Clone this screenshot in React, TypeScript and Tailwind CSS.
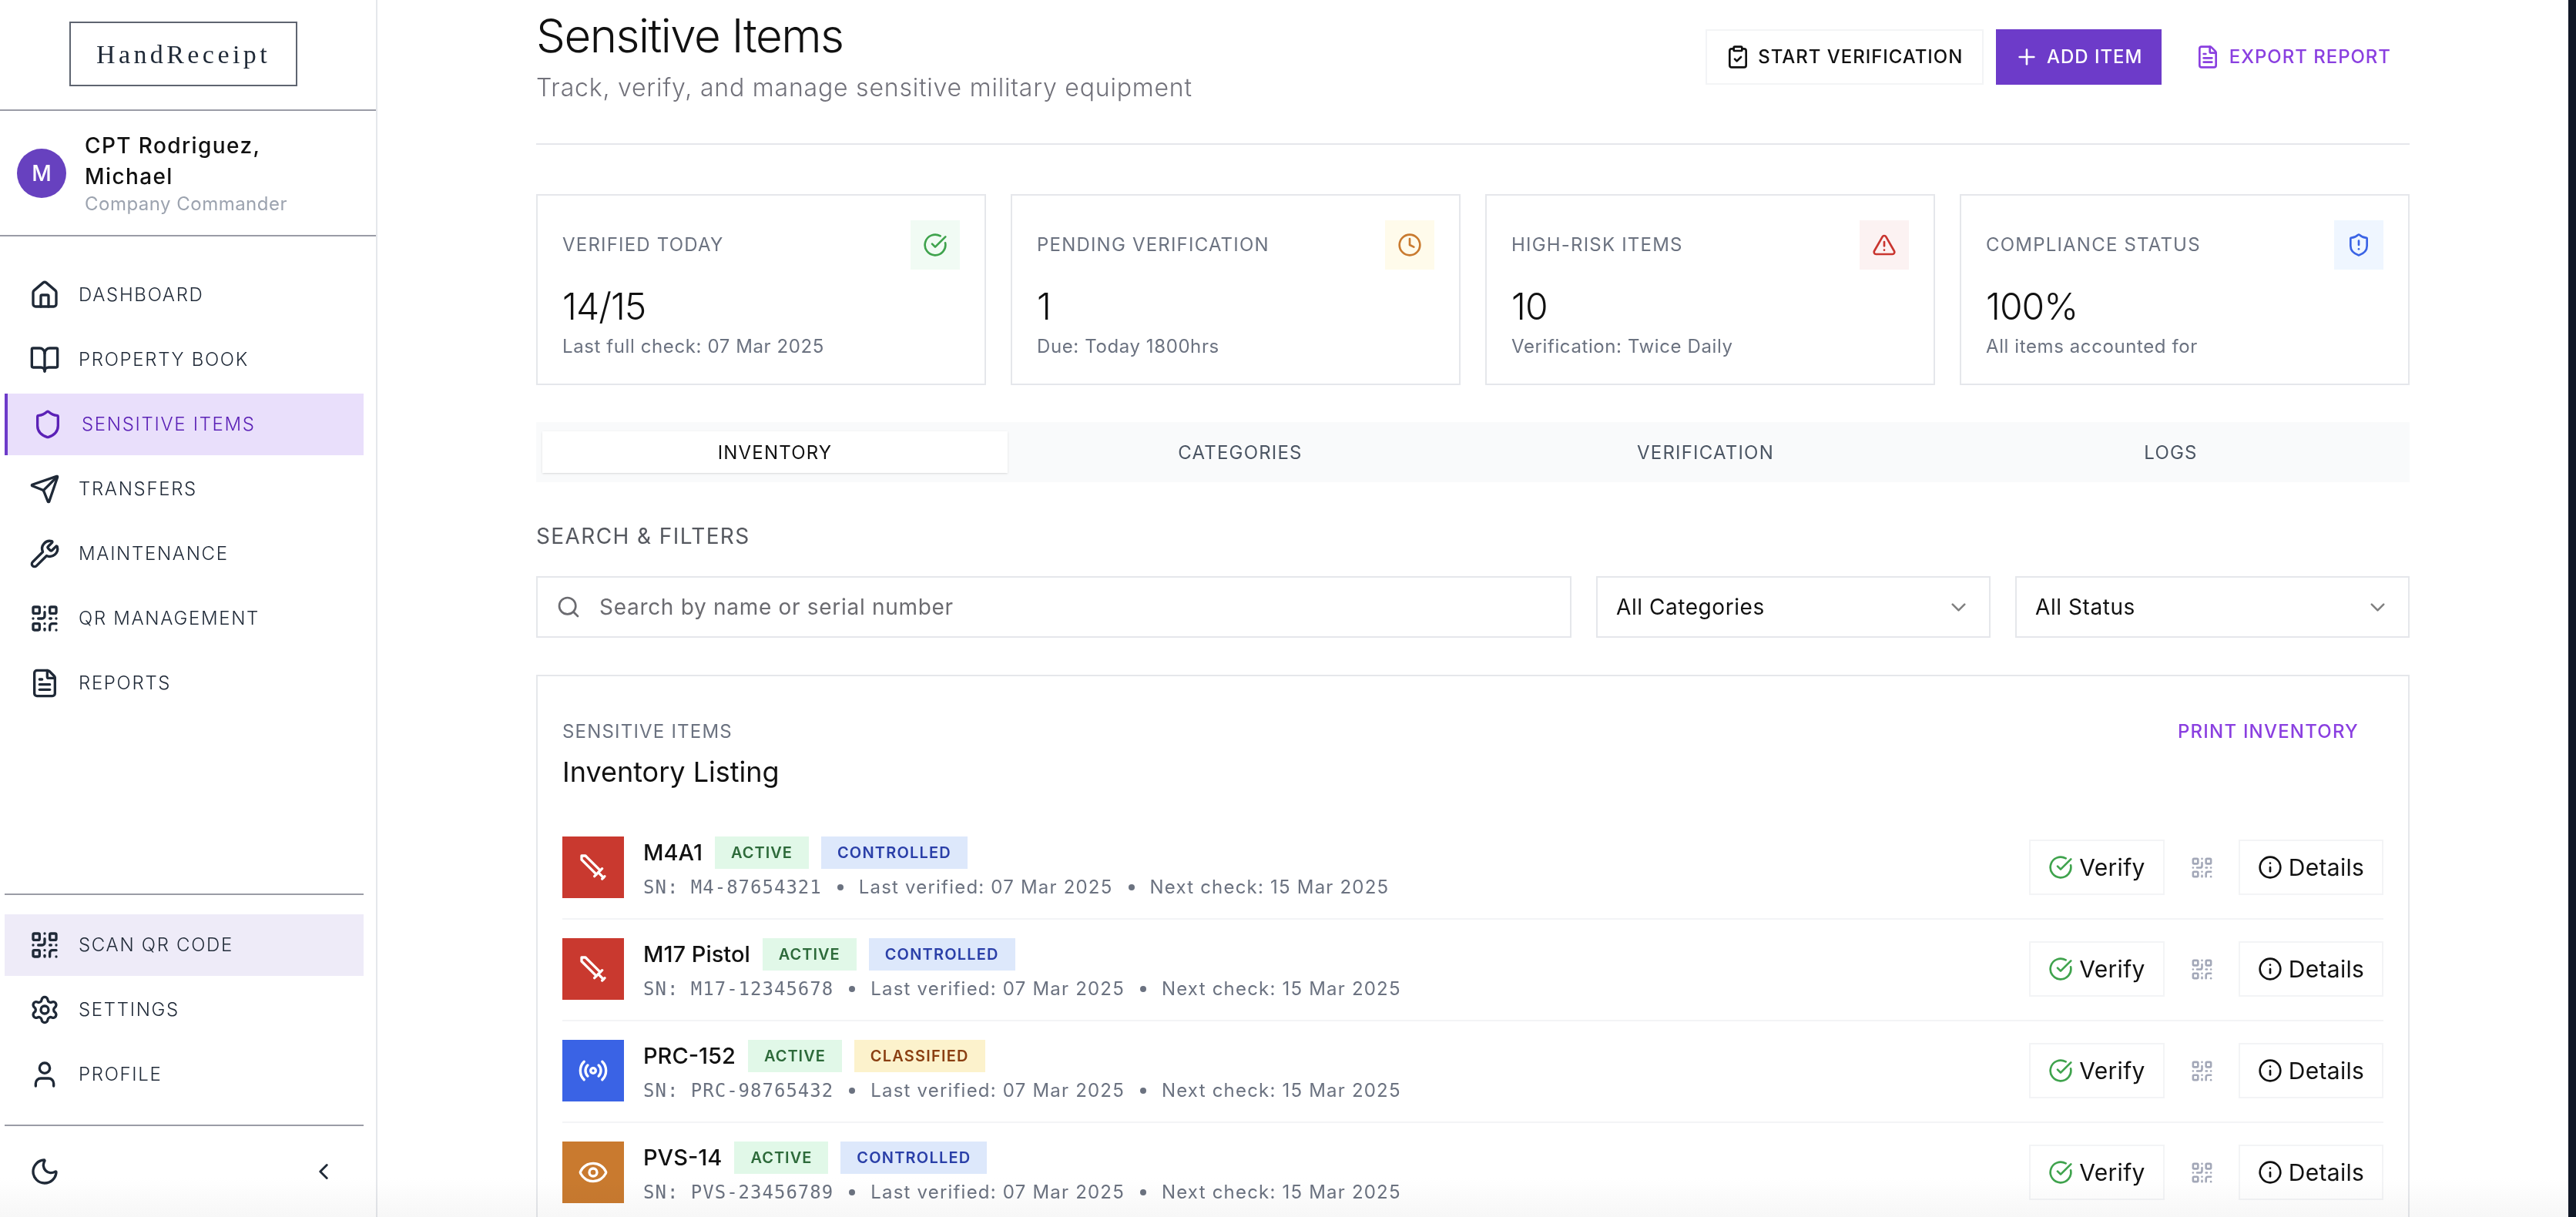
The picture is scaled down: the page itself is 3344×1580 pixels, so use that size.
import {
  BookOpen,
  ChevronDown,
  ChevronLeft,
  CircleCheckBig,
  ClipboardCheck,
  Clock,
  Eye,
  FileText,
  Home,
  Info,
  Moon,
  Plus,
  QrCode,
  Radio,
  Search,
  Send,
  Settings,
  Shield,
  ShieldAlert,
  Sword,
  TriangleAlert,
  User,
  Wrench,
} from 'lucide-react';

const mainNav = [
  { label: 'DASHBOARD', icon: Home },
  { label: 'PROPERTY BOOK', icon: BookOpen },
  { label: 'SENSITIVE ITEMS', icon: Shield, active: true },
  { label: 'TRANSFERS', icon: Send },
  { label: 'MAINTENANCE', icon: Wrench },
  { label: 'QR MANAGEMENT', icon: QrCode },
  { label: 'REPORTS', icon: FileText },
];

const stats = [
  { label: 'VERIFIED TODAY', value: '14/15', sub: 'Last full check: 07 Mar 2025', icon: CircleCheckBig, box: 'bg-[#f1fbf4] text-[#3fa34d]' },
  { label: 'PENDING VERIFICATION', value: '1', sub: 'Due: Today 1800hrs', icon: Clock, box: 'bg-[#fffbeb] text-[#c97a2f]' },
  { label: 'HIGH-RISK ITEMS', value: '10', sub: 'Verification: Twice Daily', icon: TriangleAlert, box: 'bg-[#fcf2f2] text-[#c9352f]' },
  { label: 'COMPLIANCE STATUS', value: '100%', sub: 'All items accounted for', icon: ShieldAlert, box: 'bg-[#eff6ff] text-[#3a63e5]' },
];

const items = [
  { name: 'M4A1', sn: 'M4-87654321', tag: 'CONTROLLED', icon: Sword, color: 'bg-[#c9392f]', flip: true },
  { name: 'M17 Pistol', sn: 'M17-12345678', tag: 'CONTROLLED', icon: Sword, color: 'bg-[#c9392f]', flip: true },
  { name: 'PRC-152', sn: 'PRC-98765432', tag: 'CLASSIFIED', icon: Radio, color: 'bg-[#3a63e5]' },
  { name: 'PVS-14', sn: 'PVS-23456789', tag: 'CONTROLLED', icon: Eye, color: 'bg-[#c97a2f]' },
];

function NavItem({ label, icon: Icon, active, tint }: { label: string; icon: typeof Home; active?: boolean; tint?: boolean }) {
  return (
    <div
      className={
        active
          ? 'flex h-[80px] items-center gap-[24px] border-l-4 border-[#6d3bc9] bg-[#e9dffb] pl-[32px] text-[#5b21b6]'
          : tint
            ? 'flex h-[80px] items-center gap-[24px] bg-[#eeebf8] pl-[32px] text-[#1f2937]'
            : 'flex h-[80px] items-center gap-[24px] pl-[32px] text-[#1f2937]'
      }
    >
      <Icon className="size-[40px] shrink-0" strokeWidth={2} />
      <span className="text-[24px] font-light tracking-[0.07em]">{label}</span>
    </div>
  );
}

function Sidebar() {
  return (
    <aside className="flex h-full w-[490px] shrink-0 flex-col border-r-2 border-[#e5e7eb] bg-white">
      <div className="flex h-[144px] items-center justify-center border-b-2 border-[#9a9ca6] pr-[12px] pb-[2px]">
        <div className="flex h-[84px] w-[296px] items-center justify-center border-2 border-[#5e6470] font-['Liberation_Serif',serif] text-[34px] tracking-[0.13em] text-[#1f2937]">
          HandReceipt
        </div>
      </div>
      <div className="flex h-[163px] items-center gap-[24px] border-b-2 border-[#9a9ca6] pl-[22px]">
        <div className="flex size-[64px] shrink-0 items-center justify-center rounded-full bg-[#6741bf] text-[28px] font-medium text-white">
          M
        </div>
        <div>
          <div className="w-[320px] text-[28px] leading-[40px] font-medium tracking-[0.05em] text-[#111111]">
            CPT Rodriguez, Michael
          </div>
          <div className="text-[24px] leading-[32px] tracking-[0.02em] text-[#9ca3af]">Company Commander</div>
        </div>
      </div>
      <nav className="flex flex-col gap-[4px] pt-[36px] pr-[16px] pl-[6px]">
        {mainNav.map((item) => (
          <NavItem key={item.label} {...item} />
        ))}
      </nav>
      <div className="mt-auto mr-[16px] ml-[6px] flex flex-col gap-[4px] border-t-2 border-[#9a9ca6] pt-[25px] pb-[25px]">
        <NavItem label="SCAN QR CODE" icon={QrCode} tint />
        <NavItem label="SETTINGS" icon={Settings} />
        <NavItem label="PROFILE" icon={User} />
      </div>
      <div className="mr-[16px] ml-[6px] flex h-[120px] items-center justify-between border-t-2 border-[#9a9ca6] pr-[35px] pl-[32px] text-[#1f2937]">
        <Moon className="size-[40px]" strokeWidth={2} />
        <ChevronLeft className="size-[34px]" strokeWidth={2} />
      </div>
    </aside>
  );
}

function StatCard({ label, value, sub, icon: Icon, box }: (typeof stats)[number]) {
  return (
    <div className="h-[248px] border-2 border-[#e5e7eb] px-[32px] pt-[32px]">
      <div className="flex h-[64px] items-center justify-between">
        <span className="text-[24px] tracking-[0.05em] text-[#6b7280]">{label}</span>
        <div className={`flex size-[64px] items-center justify-center ${box}`}>
          <Icon className="size-[32px]" strokeWidth={2} />
        </div>
      </div>
      <div className="mt-[18px] text-[48px] leading-[60px] font-light tracking-[-0.02em] text-[#111111]">{value}</div>
      <div className="mt-[6px] text-[24px] leading-[32px] tracking-[0.025em] text-[#6b7280]">{sub}</div>
    </div>
  );
}

function Row({ item, last }: { item: (typeof items)[number]; last: boolean }) {
  const Icon = item.icon;
  return (
    <div className={last ? 'flex items-center gap-[25px]' : 'mb-[24px] flex items-center gap-[25px] border-b-2 border-[#f3f4f6] pb-[26px]'}>
      <div className={`flex size-[80px] shrink-0 items-center justify-center text-white ${item.color}`}>
        <Icon className={item.flip ? 'size-[40px] -scale-x-100' : 'size-[40px]'} strokeWidth={2} />
      </div>
      <div className="h-[80px] flex-1">
        <div className="flex h-[42px] items-center gap-[16px]">
          <span className="text-[29px] font-medium text-[#111111]">{item.name}</span>
          <span className="flex h-[42px] items-center bg-[#e1f8e8] px-[21px] text-[20px] font-semibold tracking-[0.05em] text-[#2d6a3a]">ACTIVE</span>
          <span
            className={
              item.tag === 'CLASSIFIED'
                ? 'flex h-[42px] items-center bg-[#fcf2cc] px-[21px] text-[20px] font-semibold tracking-[0.06em] text-[#8a3f12]'
                : 'flex h-[42px] items-center bg-[#dde8fb] px-[21px] text-[20px] font-semibold tracking-[0.06em] text-[#2a3fa8]'
            }
          >
            {item.tag}
          </span>
        </div>
        <div className="mt-[8px] flex items-center text-[24px] leading-[32px] tracking-[0.05em] text-[#6b7280]">
          <span className="font-['DejaVu_Sans_Mono',monospace] tracking-[1px]">SN: {item.sn}</span>
          <span className="mx-[20px] size-[8px] rounded-full bg-[#6b7280]" />
          <span>Last verified: 07 Mar 2025</span>
          <span className="mx-[20px] size-[8px] rounded-full bg-[#6b7280]" />
          <span>Next check: 15 Mar 2025</span>
        </div>
      </div>
      <div className="flex items-center">
        <button className="flex h-[72px] w-[176px] items-center justify-center gap-[8px] border-2 border-[#f3f4f6] text-[30px] tracking-[0.01em] text-[#111111]">
          <CircleCheckBig className="size-[32px] text-[#3fa34d]" strokeWidth={2} />
          Verify
        </button>
        <div className="flex w-[96px] justify-center">
          <QrCode className="size-[31px] text-[#a3a8b8]" strokeWidth={2} />
        </div>
        <button className="flex h-[72px] w-[188px] items-center justify-center gap-[8px] border-2 border-[#f3f4f6] text-[30px] tracking-[0.01em] text-[#111111]">
          <Info className="size-[32px]" strokeWidth={2} />
          Details
        </button>
      </div>
    </div>
  );
}

export default function App() {
  return (
    <div className="relative flex h-[1580px] w-[3344px] overflow-hidden bg-white font-['Inter',sans-serif]">
      <Sidebar />
      <main className="flex-1 px-[206px] pt-[8px]">
        <header className="flex h-[180px] items-start justify-between border-b-2 border-[#e5e7eb]">
          <div>
            <h1 className="text-[60px] leading-[76px] font-light tracking-[-0.025em] text-[#111111]">Sensitive Items</h1>
            <p className="mt-[8px] text-[32px] leading-[44px] font-light tracking-[0.025em] text-[#71717a]">
              Track, verify, and manage sensitive military equipment
            </p>
          </div>
          <div className="mt-[30px] mr-[24px] flex items-center gap-[16px] text-[24px] font-medium tracking-[0.04em]">
            <button className="flex h-[72px] w-[361px] items-center justify-center gap-[10px] border-2 border-[#f3f4f6] text-[#111111]">
              <ClipboardCheck className="size-[32px]" strokeWidth={2} />
              START VERIFICATION
            </button>
            <button className="flex h-[72px] w-[215px] items-center justify-center gap-[10px] bg-[#6d3bc9] text-white">
              <Plus className="size-[32px]" strokeWidth={2} />
              ADD ITEM
            </button>
            <button className="ml-[28px] flex h-[72px] items-center gap-[12px] text-[#8a3fe0]">
              <FileText className="size-[32px]" strokeWidth={2} />
              EXPORT REPORT
            </button>
          </div>
        </header>

        <section className="mt-[64px] grid grid-cols-4 gap-[32px]">
          {stats.map((stat) => (
            <StatCard key={stat.label} {...stat} />
          ))}
        </section>

        <div className="mt-[48px] grid h-[78px] grid-cols-4 bg-[#f9fafb] px-[8px] py-[12px] text-[24px] tracking-[0.05em] text-[#4b5563]">
          <div className="flex items-center justify-center bg-white pt-[2px] text-[#111111] shadow-sm">INVENTORY</div>
          <div className="flex items-center justify-center pt-[2px]">CATEGORIES</div>
          <div className="flex items-center justify-center pt-[2px]">VERIFICATION</div>
          <div className="flex items-center justify-center pt-[2px]">LOGS</div>
        </div>

        <h2 className="mt-[50px] text-[28px] leading-[40px] tracking-[0.05em] text-[#55585f]">SEARCH &amp; FILTERS</h2>

        <div className="mt-[32px] flex gap-[32px]">
          <div className="flex h-[80px] flex-1 items-center gap-[24px] border-2 border-[#e5e7eb] px-[24px] text-[28px] tracking-[0.025em] text-[#6b6b70]">
            <Search className="size-[32px]" strokeWidth={2} />
            Search by name or serial number
          </div>
          <div className="flex h-[80px] w-[512px] items-center justify-between border-2 border-[#e5e7eb] pr-[24px] pl-[24px] text-[28px] tracking-[0.02em] text-[#111111]">
            All Categories
            <ChevronDown className="size-[31px] text-[#808080]" strokeWidth={2} />
          </div>
          <div className="flex h-[80px] w-[512px] items-center justify-between border-2 border-[#e5e7eb] pr-[24px] pl-[24px] text-[28px] tracking-[0.02em] text-[#111111]">
            All Status
            <ChevronDown className="size-[31px] text-[#808080]" strokeWidth={2} />
          </div>
        </div>

        <section className="mt-[48px] border-2 border-[#e5e7eb] px-[32px] pt-[56px] pb-[40px]">
          <div className="flex items-center justify-between pr-[32px]">
            <span className="text-[24px] leading-[32px] tracking-[0.05em] text-[#6b7280]">SENSITIVE ITEMS</span>
            <span className="text-[24px] leading-[32px] font-medium tracking-[0.05em] text-[#8a3fe0]">PRINT INVENTORY</span>
          </div>
          <h3 className="mt-[16px] mb-[64px] text-[36px] leading-[40px] text-[#111111]">Inventory Listing</h3>
          {items.map((item, i) => (
            <Row key={item.name} item={item} last={i === items.length - 1} />
          ))}
        </section>
      </main>
      <div className="w-[10px] shrink-0 bg-[#111827]" />
      <div className="pointer-events-none absolute right-[10px] bottom-0 left-0 h-[50px] bg-gradient-to-b from-white to-[#f7f7f7] mix-blend-multiply" />
    </div>
  );
}
